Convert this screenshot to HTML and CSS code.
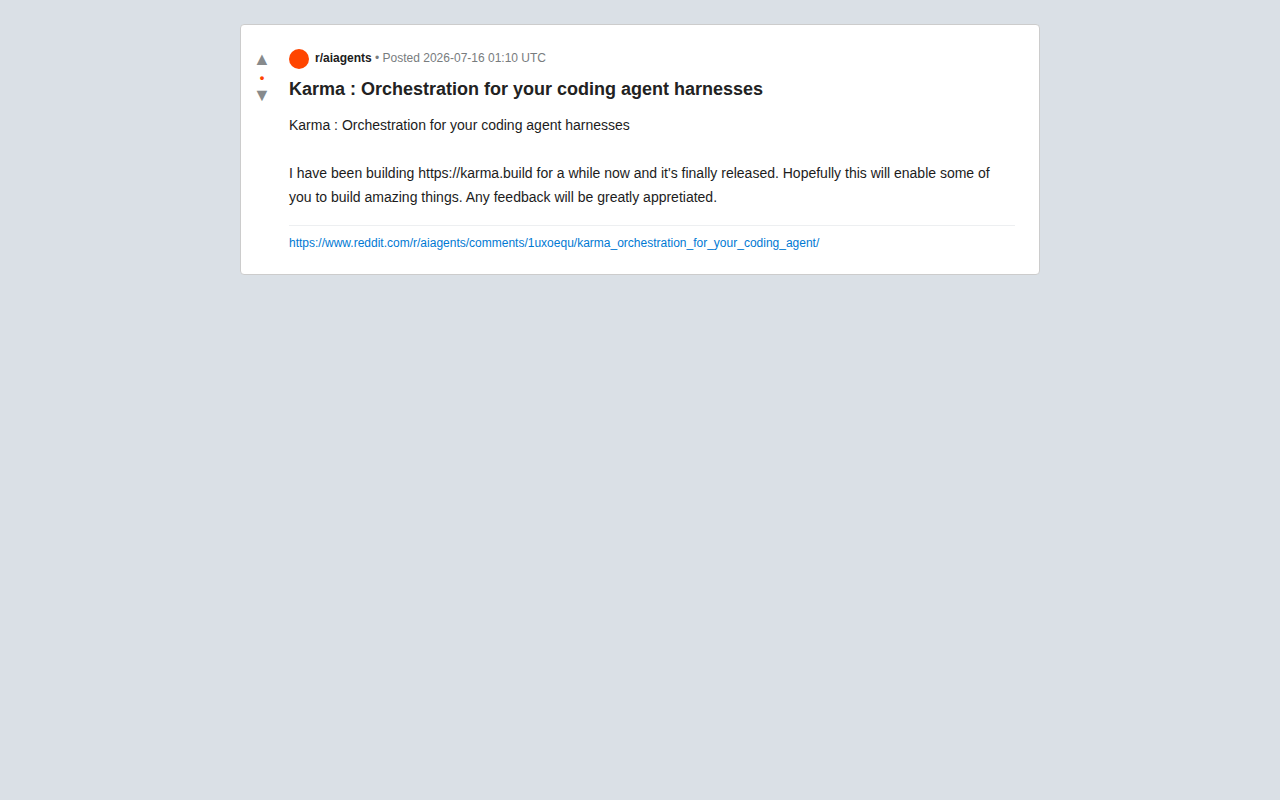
FILE: index.html
```html
<!DOCTYPE html>
<html lang="en">
<head>
<meta charset="utf-8">
<title>Karma : Orchestration for your coding agent harnesses</title>
<link rel="stylesheet" href="styles.css">
</head>
<body>
<article class="post">
  <div class="votes">
    <button class="vote" type="button" aria-label="Upvote">▲</button>
    <span class="score">•</span>
    <button class="vote" type="button" aria-label="Downvote">▼</button>
  </div>
  <div class="content">
    <div class="meta">
      <span class="avatar"></span>
      <span><strong class="community">r/aiagents</strong> • Posted 2026-07-16 01:10 UTC</span>
    </div>
    <h1 class="title">Karma : Orchestration for your coding agent harnesses</h1>
    <div class="text">
      <p>Karma : Orchestration for your coding agent harnesses</p>
      <p>I have been building https://karma.build for a while now and it's finally released. Hopefully this will enable some of you to build amazing things. Any feedback will be greatly appretiated.</p>
    </div>
    <footer class="source">
      <a class="link" href="https://www.reddit.com/r/aiagents/comments/1uxoequ/karma_orchestration_for_your_coding_agent/">https://www.reddit.com/r/aiagents/comments/1uxoequ/karma_orchestration_for_your_coding_agent/</a>
    </footer>
  </div>
</article>
</body>
</html>
```
FILE: styles.css
```css
* {
  box-sizing: border-box;
}

body {
  margin: 0;
  padding: 24px;
  background: #dae0e6;
  color: #1c1c1c;
  font-family: "Liberation Sans", Arial, sans-serif;
}

.post {
  display: flex;
  max-width: 800px;
  margin: 0 auto;
  padding: 24px 24px 24px 0;
  background: #fff;
  border: 1px solid #ccc;
  border-radius: 4px;
}

.votes {
  display: flex;
  flex-direction: column;
  align-items: center;
  flex: 0 0 42px;
  margin-right: 6px;
}

.vote {
  padding: 0;
  border: 0;
  background: none;
  color: #878a8c;
  font-family: inherit;
  font-size: 18px;
  line-height: 21px;
  cursor: pointer;
}

.score {
  color: #ff4500;
  font-size: 13px;
  font-weight: 700;
  line-height: 15px;
}

.content {
  flex: 1;
  min-width: 0;
}

.meta {
  display: flex;
  gap: 6px;
  margin-bottom: 8px;
  color: #787c7e;
  font-size: 12px;
  line-height: 18px;
}

.avatar {
  width: 20px;
  height: 20px;
  border-radius: 50%;
  background: #ff4500;
}

.community {
  color: #1c1c1c;
}

.title {
  margin: 0 0 12px;
  color: #222;
  font-size: 18px;
  line-height: 24px;
}

.text {
  font-size: 14px;
  line-height: 24px;
}

.text p {
  margin: 0 0 24px;
}

.text p:last-child {
  margin: 0;
}

.source {
  margin-top: 16px;
  padding-top: 10px;
  border-top: 1px solid #edeff1;
  font-size: 12px;
  line-height: 14px;
}

.link {
  color: #0079d3;
  text-decoration: none;
  overflow-wrap: anywhere;
}
```
